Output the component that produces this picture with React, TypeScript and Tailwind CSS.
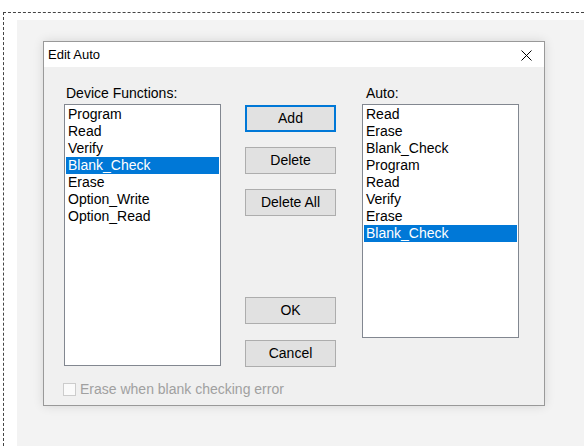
import React from "react";

const font = { fontFamily: '"Liberation Sans", Arial, sans-serif' };

const deviceFunctions = ["Program", "Read", "Verify", "Blank_Check", "Erase", "Option_Write", "Option_Read"];
const autoSteps = ["Read", "Erase", "Blank_Check", "Program", "Read", "Verify", "Erase", "Blank_Check"];

function ListBox({ items, selected, height }: { items: string[]; selected: number; height: string }) {
  return (
    <div className={`w-[157px] ${height} border border-[#828790] bg-white p-[1px]`}>
      {items.map((item, i) => (
        <div
          key={i}
          className={`h-[17px] pl-[2px] text-[14px] leading-[17px] whitespace-nowrap ${
            i === selected ? "bg-[#0078d7] text-white" : "text-black"
          }`}
        >
          {item}
        </div>
      ))}
    </div>
  );
}

function Button({ label, isDefault }: { label: string; isDefault?: boolean }) {
  return (
    <div
      className={`flex h-[27px] w-[91px] items-center justify-center bg-[#e1e1e1] text-[14px] text-black ${
        isDefault ? "border-2 border-[#0078d7]" : "border border-[#adadad]"
      }`}
    >
      {label}
    </div>
  );
}

export default function App() {
  return (
    <div className="flex h-[446px] w-full min-w-[584px] flex-col overflow-hidden bg-white pl-[3px] pt-[12px]" style={font}>
      <div className="flex flex-1 flex-col border-l border-t border-dashed border-[#444] pl-[13px] pt-[7px]">
        <div className="flex-1 bg-[#f3f3f3] pl-[26px] pt-[21px]">
          {/* Edit Auto dialog */}
          <div className="flex h-[365px] w-[502px] flex-col border border-[#999] bg-[#f0f0f0] shadow-[0_0_10px_rgba(0,0,0,0.12)]">
            <div className="flex h-[25px] items-center justify-between bg-white pl-[4px] pr-[12px]">
              <span className="text-[13px] text-black">Edit Auto</span>
              <svg width="11" height="11" viewBox="0 0 11 11" className="mt-[1px]">
                <path d="M0.5 0.5 L10.5 10.5 M10.5 0.5 L0.5 10.5" stroke="#000" strokeWidth="1" fill="none" />
              </svg>
            </div>
            <div className="flex pl-[20px] pt-[18px]">
              <div className="flex w-[157px] flex-col">
                <div className="h-[19px] pl-[2px] text-[14px] leading-[16px] text-black">Device Functions:</div>
                <ListBox items={deviceFunctions} selected={3} height="h-[262px]" />
                <div className="mt-[15px] flex h-[17px] items-center whitespace-nowrap">
                  <div className="ml-[-1px] h-[13px] w-[13px] shrink-0 border border-[#cccccc] bg-[#fafafa]" />
                  <span className="ml-[4px] text-[14px] text-[#a0a0a0]">Erase when blank checking error</span>
                </div>
              </div>
              <div className="ml-[24px] flex flex-col pt-[20px]">
                <Button label="Add" isDefault />
                <div className="mt-[15px]">
                  <Button label="Delete" />
                </div>
                <div className="mt-[15px]">
                  <Button label="Delete All" />
                </div>
                <div className="mt-[81px]">
                  <Button label="OK" />
                </div>
                <div className="mt-[16px]">
                  <Button label="Cancel" />
                </div>
              </div>
              <div className="ml-[26px] flex flex-col">
                <div className="h-[19px] pl-[4px] text-[14px] leading-[16px] text-black">Auto:</div>
                <ListBox items={autoSteps} selected={7} height="h-[234px]" />
              </div>
            </div>
          </div>
        </div>
      </div>
    </div>
  );
}
